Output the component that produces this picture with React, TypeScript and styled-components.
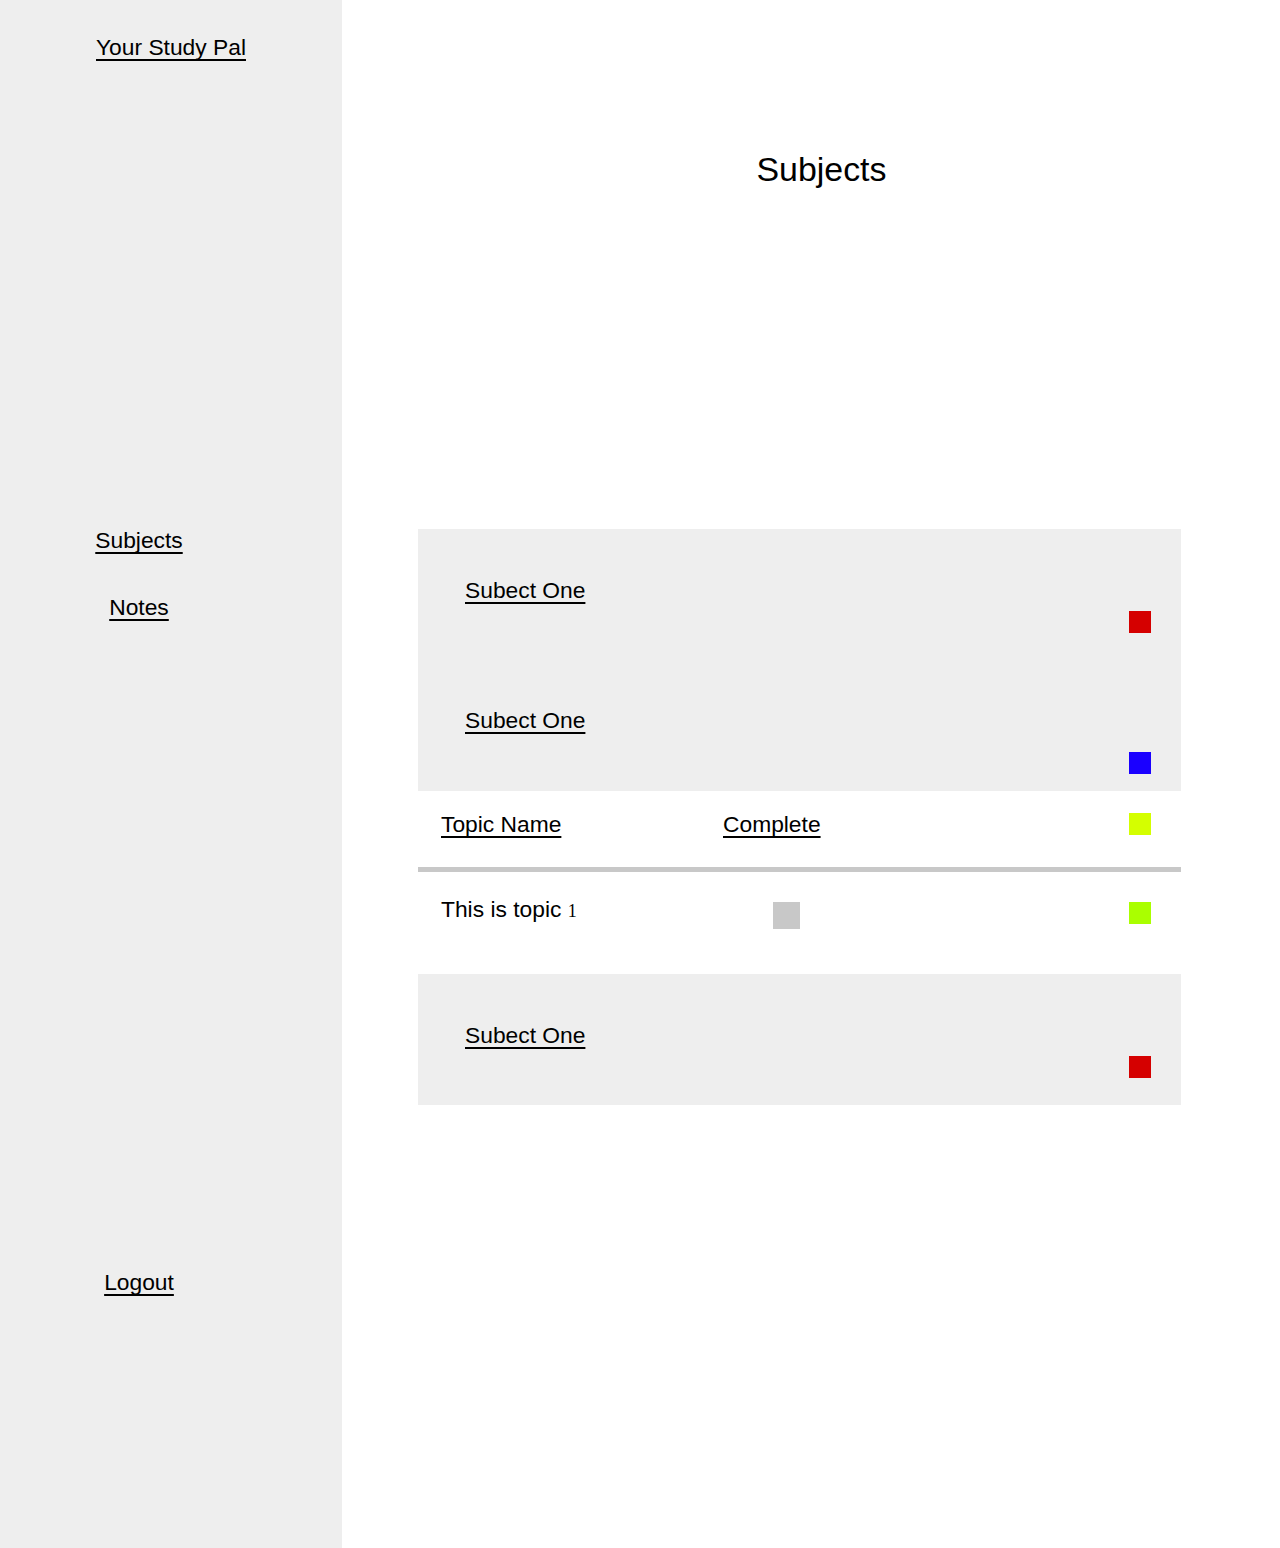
import React from "react";
import styled, { createGlobalStyle } from "styled-components";

const GlobalStyle = createGlobalStyle`
  html, body {
    margin: 0;
    padding: 0;
    background: #ffffff;
    font-family: "Liberation Sans", Arial, sans-serif;
    color: #000;
  }
  * { box-sizing: border-box; }
`;

const Page = styled.div`
  display: flex;
  min-height: 100vh;
  font-size: 22.8px;
  line-height: 26px;
`;

const Sidebar = styled.aside`
  width: 342px;
  flex: 0 0 342px;
  min-height: 1548px;
  background: #eeeeee;
  display: flex;
  flex-direction: column;
  padding-top: 34px;
`;

const Link = styled.a`
  color: #000;
  text-decoration: underline;
  text-decoration-skip-ink: none;
  text-underline-offset: 4px;
  cursor: pointer;
`;

const Brand = styled.div`
  text-align: center;
`;

const Nav = styled.nav<{ $top: number }>`
  display: flex;
  flex-direction: column;
  align-items: center;
  padding-right: 64px;
  margin-top: ${(p) => p.$top}px;
  gap: 41px;
`;

const Main = styled.main`
  flex: 1;
  padding: 150px 99px 0 76px;
  display: flex;
  flex-direction: column;
`;

const Heading = styled.h1`
  margin: 0;
  font-weight: normal;
  font-size: 33.9px;
  line-height: 39px;
  text-align: center;
  padding-left: 44px;
`;

const Card = styled.section`
  margin-top: 340px;
  display: flex;
  flex-direction: column;
`;

const SubjectRow = styled.div<{ $height: number; $squareTop: number }>`
  background: #eeeeee;
  height: ${(p) => p.$height}px;
  display: flex;
  justify-content: space-between;
  align-items: flex-start;
  padding: 48px 30px 0 47px;

  & > span:last-child {
    margin-top: ${(p) => p.$squareTop - 48}px;
  }
`;

const Swatch = styled.span<{ $color: string; $size?: number }>`
  display: block;
  width: ${(p) => p.$size ?? 22}px;
  height: ${(p) => p.$size ?? 22}px;
  background: ${(p) => p.$color};
  flex: 0 0 auto;
`;

const TopicTable = styled.div`
  display: flex;
  flex-direction: column;
  background: #ffffff;
`;

const TableRow = styled.div<{ $height: number; $padTop: number; $border?: boolean }>`
  display: grid;
  grid-template-columns: 282px 1fr 22px;
  align-items: start;
  height: ${(p) => p.$height}px;
  padding: ${(p) => p.$padTop}px 30px 0 23px;
  border-bottom: ${(p) => (p.$border ? "5px solid #c8c8c8" : "none")};
`;

const Cell = styled.div<{ $offset?: number }>`
  margin-top: ${(p) => p.$offset ?? 0}px;
`;

const CheckCell = styled.div`
  padding-left: 50px;
  margin-top: 6px;
`;

const Digit = styled.span`
  font-family: "Liberation Serif", "Times New Roman", serif;
  font-size: 18px;
`;

export default function App() {
  return (
    <>
      <GlobalStyle />
      <Page>
        <Sidebar>
          <Brand>
            <Link>Your Study Pal</Link>
          </Brand>
          <Nav $top={467}>
            <Link>Subjects</Link>
            <Link>Notes</Link>
          </Nav>
          <Nav $top={649}>
            <Link>Logout</Link>
          </Nav>
        </Sidebar>
        <Main>
          <Heading>Subjects</Heading>
          <Card>
            <SubjectRow $height={130} $squareTop={82}>
              <Link>Subect One</Link>
              <Swatch $color="#d50000" />
            </SubjectRow>
            <SubjectRow $height={132} $squareTop={93}>
              <Link>Subect One</Link>
              <Swatch $color="#1a00ff" />
            </SubjectRow>
            <TopicTable>
              <TableRow $height={81} $padTop={20} $border>
                <Cell>
                  <Link>Topic Name</Link>
                </Cell>
                <Cell>
                  <Link>Complete</Link>
                </Cell>
                <Cell $offset={2}>
                  <Swatch $color="#d4ff00" />
                </Cell>
              </TableRow>
              <TableRow $height={102} $padTop={24}>
                <Cell>
                  This is topic <Digit>1</Digit>
                </Cell>
                <CheckCell>
                  <Swatch $color="#c8c8c8" $size={27} />
                </CheckCell>
                <Cell $offset={6}>
                  <Swatch $color="#aaff00" />
                </Cell>
              </TableRow>
            </TopicTable>
            <SubjectRow $height={131} $squareTop={82}>
              <Link>Subect One</Link>
              <Swatch $color="#d50000" />
            </SubjectRow>
          </Card>
        </Main>
      </Page>
    </>
  );
}
